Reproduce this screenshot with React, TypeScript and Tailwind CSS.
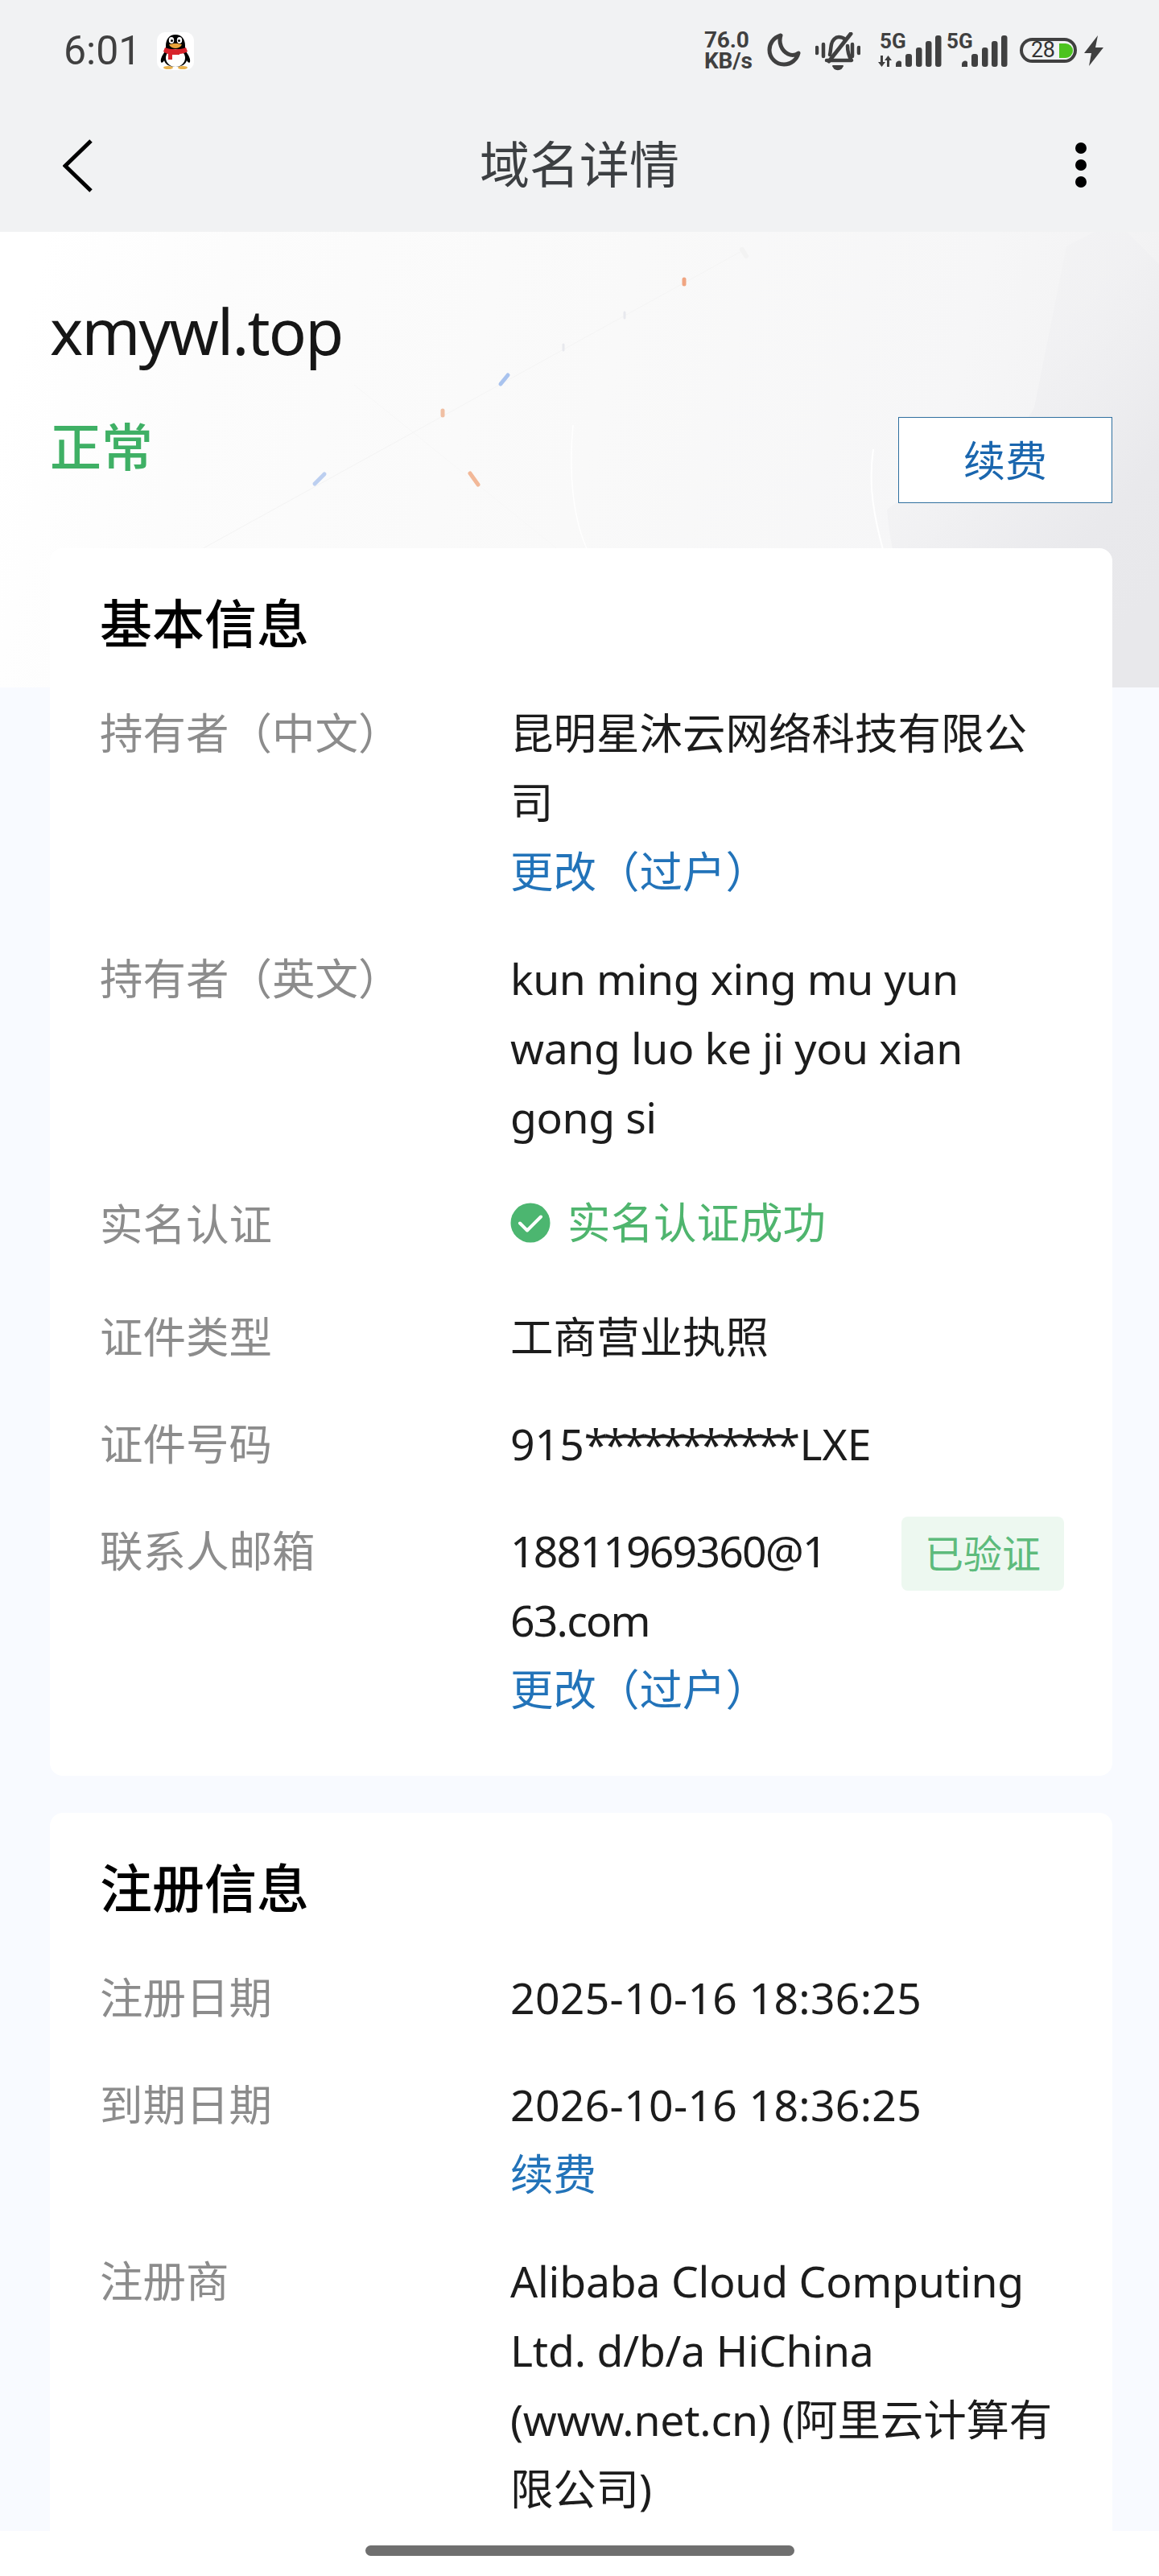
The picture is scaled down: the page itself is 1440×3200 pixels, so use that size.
import React from "react";

const FONT = "[font-family:'Noto_Sans','Noto_Sans_CJK_SC',sans-serif]";

function Penguin() {
  return (
    <div className="w-[46px] h-[47px] rounded-[10px] bg-white flex items-center justify-center ml-[27px]">
      <svg width="46" height="47" viewBox="0 0 46 47">
        <ellipse cx="14" cy="44" rx="6" ry="2" fill="#e9b04a" />
        <ellipse cx="32" cy="44" rx="6" ry="2" fill="#e9b04a" />
        <path d="M23 3c-8 0-12 6-12 14 0 3 0 5-1 7-3 4-6 9-5 13 1 2 3 0 4-2 1 5 7 8 14 8s13-3 14-8c1 2 3 4 4 2 1-4-2-9-5-13-1-2-1-4-1-7 0-8-4-14-12-14z" fill="#000" />
        <ellipse cx="23" cy="32" rx="12" ry="11" fill="#fff" />
        <path d="M10 19c7 3 19 3 26 0l2 5c-3 2-7 3-10 3v1h-9v6h-5v-7c-2-1-4-1-6-3z" fill="#d8242c" />
        <ellipse cx="18" cy="10" rx="3.2" ry="4" fill="#fff" />
        <ellipse cx="28" cy="10" rx="3.2" ry="4" fill="#fff" />
        <circle cx="18.5" cy="10.5" r="1.5" fill="#000" />
        <circle cx="27.5" cy="10.5" r="1.5" fill="#000" />
        <path d="M15 15.5c4-2 12-2 16 0-2 3.5-5 4.5-8 4.5s-6-1-8-4.5z" fill="#e8a33b" />
      </svg>
    </div>
  );
}

function Bars() {
  return (
    <svg width="58" height="40" viewBox="0 0 58 40" fill="#404040">
      <path d="M1 39v-4a4 4 0 0 1 7-2v6z" />
      <rect x="13" y="23" width="8" height="16" rx="3" />
      <rect x="26" y="15" width="7.5" height="24" rx="3" />
      <rect x="38" y="7" width="7.5" height="32" rx="3" />
      <rect x="50" y="0" width="7.5" height="39" rx="3" />
    </svg>
  );
}

function StatusBar() {
  return (
    <div className="h-[130px] flex items-start justify-between pl-[79px] pr-[69px]">
      <div className="flex items-start pt-[40px]">
        <span className="w-[89px] text-[50px] leading-[46px] text-[#404040] font-['Roboto',sans-serif]">6:01</span>
        <Penguin />
      </div>
      <div className="flex items-start pt-[40px] text-[#404040]">
        <div className="w-[66px] -mt-[3px] font-['Roboto',sans-serif] font-bold text-[28px] tracking-[-0.2px] text-left">
          <div className="h-[26px] leading-[26px]">76.0</div>
          <div className="h-[26px] leading-[26px]">KB/s</div>
        </div>
        <svg className="ml-[12px] mt-[1px]" width="42" height="42" viewBox="0 0 42 42" fill="none" stroke="#404040" strokeWidth="5" strokeLinecap="round" strokeLinejoin="round">
          <path d="M17 3C7 6 3 14 3 21c0 10 8 18 18 18 9 0 16-6 18-14-4 3-9 3-13 1-8-4-12-14-9-23z" />
        </svg>
        <svg className="ml-[18px]" width="56" height="48" viewBox="0 0 56 48" fill="none" stroke="#404040" strokeWidth="4.5" strokeLinecap="round" strokeLinejoin="round">
          <path d="M2 19v7M10 15v15M46 15v15M54 19v7" />
          <path d="M44 2 17 36" strokeWidth="5" />
          <path d="M18 28c1-4 1-8 2-13 1-5 5-9 9-9 3 0 6 1 8 3M40 17c0 6 1 12 5 18H14" />
          <path d="M22 42h12l-2 3c-2 1.500-6 1.500-8 0z" fill="#404040" strokeWidth="2" />
        </svg>
        <div className="relative w-[76px] h-[42px] ml-[21px] mt-[1px]">
          <span className="absolute left-[3px] top-0 font-['Roboto',sans-serif] font-bold text-[26px] leading-[20px]">5G</span>
          <svg className="absolute left-0 bottom-[0px]" width="22" height="14" viewBox="0 0 22 14" fill="#404040">
            <path d="M4 0h3v8h3l-4.500 6L1 8h3zM15 14h-3V6H9l4.500-6L18 6h-3z" />
          </svg>
          <div className="absolute left-[22px] top-[3px]"><Bars /></div>
        </div>
        <div className="relative w-[76px] h-[42px] ml-[10px] mt-[1px]">
          <span className="absolute left-0 top-0 font-['Roboto',sans-serif] font-bold text-[26px] leading-[20px]">5G</span>
          <div className="absolute left-[18px] top-[3px]"><Bars /></div>
        </div>
        <div className="relative w-[71px] h-[31px] ml-[15px] mt-[7px] rounded-full border-[4px] border-[#404040] flex items-center">
          <span className="ml-[10px] font-['Roboto',sans-serif] text-[27px] leading-[23px] tracking-[-0.5px] text-[#333]">28</span>
          <span className="absolute left-[45px] top-[2.500px] w-[17px] h-[18px] bg-[#4cc31f] rounded-r-full" />
        </div>
        <svg className="ml-[9px] mt-[4px]" width="24" height="38" viewBox="0 0 24 38" fill="#404040">
          <path d="M17 0 0 22h9L6 38l18-23h-10z" />
        </svg>
      </div>
    </div>
  );
}

function NavBar() {
  return (
    <div className="h-[158px] flex items-start justify-between pl-[78px] pr-[90px] relative">
      <svg className="mt-[43px]" width="38" height="66" viewBox="0 0 38 66" fill="none" stroke="#000" strokeWidth="5">
        <path d="M35 2 3 33l32 31" />
      </svg>
      <div className="absolute left-0 right-0 top-[30px] text-center text-[62px] leading-[88px] text-[#3c3f42]">域名详情</div>
      <div className="mt-[47px] flex flex-col gap-[7px]">
        <span className="w-[14px] h-[14px] rounded-full bg-black" />
        <span className="w-[14px] h-[14px] rounded-full bg-black" />
        <span className="w-[14px] h-[14px] rounded-full bg-black" />
      </div>
    </div>
  );
}

function HeroArt() {
  return (
    <svg className="absolute inset-0" width="1440" height="566" viewBox="0 0 1440 566" fill="none">
      <defs>
        <linearGradient id="base" x1="0" y1="0" x2="1" y2="0.1">
          <stop offset="0.04" stopColor="#ffffff" />
          <stop offset="0.2" stopColor="#fcfcfc" />
          <stop offset="0.55" stopColor="#f9f9f9" />
          <stop offset="0.85" stopColor="#f6f6f7" />
          <stop offset="1" stopColor="#f2f2f3" />
        </linearGradient>
        <linearGradient id="dark" x1="0" y1="0" x2="0.7" y2="1">
          <stop offset="0" stopColor="#f4f4f5" stopOpacity="0.4" />
          <stop offset="0.45" stopColor="#f0f0f2" stopOpacity="0.7" />
          <stop offset="0.8" stopColor="#e9e9ec" />
          <stop offset="1" stopColor="#e8e8eb" />
        </linearGradient>
      </defs>
      <rect width="1440" height="566" fill="url(#base)" />
      <path d="M1325 18l35-18h40l40 40v526h-283c-20-70-48-140-55-221 50-40 155-70 183-127z" fill="url(#dark)" />
      <path d="M1085 270c-10 70 10 130 70 296" stroke="#ffffff" strokeWidth="2" />
      <path d="M712 240c-6 60 0 120 20 160" stroke="#ffffff" strokeWidth="1.500" />
      <path d="M925 22 240 400" stroke="#f4f4f4" strokeWidth="1" />
      <path d="M440 190 700 400" stroke="#f7f7f7" strokeWidth="1" />
      <path d="M850 59v6" stroke="#f0a582" strokeWidth="5" strokeLinecap="round" />
      <path d="M622 189l9-11" stroke="#a9c3ee" strokeWidth="5" strokeLinecap="round" />
      <path d="M550 222v6" stroke="#f0bfa3" strokeWidth="5" strokeLinecap="round" />
      <path d="M391 313l12-12" stroke="#bccff0" strokeWidth="5" strokeLinecap="round" />
      <path d="M584 300l10 14" stroke="#f2b898" strokeWidth="5" strokeLinecap="round" />
      <path d="M776 100v7M700 140v7" stroke="#e8e9ee" strokeWidth="3" strokeLinecap="round" />
      <path d="M922 22l5 8" stroke="#f3f3f3" strokeWidth="6" strokeLinecap="round" />
    </svg>
  );
}

function Hero() {
  return (
    <div className="relative h-[566px] pl-[62px] pr-[58px]">
      <HeroArt />
      <div className="relative flex justify-between items-start">
        <div>
          <div className="pt-[76px] text-[78px] leading-[94px] tracking-[-1.800px] text-[#161616]">xmywl.top</div>
          <div className="pt-[53px] text-[64px] leading-[88px] text-[#3fb065] font-medium">正常</div>
        </div>
        <div className="mt-[230px] w-[266px] h-[107px] bg-white border border-[#2f6f9f] flex items-center justify-center text-[52px] text-[#1a66ae]">续费</div>
      </div>
    </div>
  );
}

function Row({ label, children, last }: { label: string; children: React.ReactNode; last?: boolean }) {
  return (
    <div className={`flex ${last ? "" : "mb-[47px]"}`}>
      <div className="w-[510px] shrink-0 text-[#8c8c8c]">{label}</div>
      <div className="flex-1 min-w-0">{children}</div>
    </div>
  );
}

function Link({ children }: { children: React.ReactNode }) {
  return <div className="text-[#2273b9]">{children}</div>;
}

function Card({ title, children, className = "" }: { title: string; children: React.ReactNode; className?: string }) {
  return (
    <div className={`relative bg-white rounded-[16px] pl-[62px] pr-[60px] text-[53.500px] leading-[86px] text-[#1c1c1c] ${className}`}>
      <div className="h-[187px] text-[65px] leading-[186px] font-medium text-black">{title}</div>
      {children}
    </div>
  );
}

export default function App() {
  return (
    <div className={`w-[1440px] h-[3200px] flex flex-col bg-white overflow-hidden ${FONT}`}>
      <div className="bg-[#f1f2f3]">
        <StatusBar />
        <NavBar />
      </div>
      <div className="flex-1 min-h-0 overflow-hidden bg-[#f8faff]">
        <Hero />
        <div className="-mt-[173px] ml-[62px] mr-[58px] flex flex-col gap-[46px]">
          <Card title="基本信息" className="pb-[64px]">
            <Row label="持有者（中文）">
              <div>昆明星沐云网络科技有限公司</div>
              <Link>更改（过户）</Link>
            </Row>
            <Row label="持有者（英文）">
              <div className="tracking-[-0.400px]">kun ming xing mu yun wang luo ke ji you xian gong si</div>
            </Row>
            <Row label="实名认证">
              <div className="flex items-center h-[96px] -mt-[7px] mb-[4px] text-[#4fb56e]">
                <svg className="mr-[21px]" width="50" height="50" viewBox="0 0 50 50">
                  <circle cx="25" cy="25" r="24.500" fill="#4cb670" />
                  <path d="M12 25.500l9 9 17-17" fill="none" stroke="#fff" strokeWidth="4" strokeLinecap="round" strokeLinejoin="round" />
                </svg>
                实名认证成功
              </div>
            </Row>
            <Row label="证件类型">工商营业执照</Row>
            <Row label="证件号码">
              915<span className="tracking-[-5.600px] pr-[5px]">***********</span>LXE
            </Row>
            <Row label="联系人邮箱" last>
              <div className="flex justify-between items-start">
                <div className="w-[400px] break-all tracking-[-1.800px]">18811969360@163.com</div>
                <div className="w-[202px] h-[92px] rounded-[8px] bg-[#edf8f0] text-[#5dbb7c] text-[48px] leading-[92px] text-center">已验证</div>
              </div>
              <Link>更改（过户）</Link>
            </Row>
          </Card>
          <Card title="注册信息">
            <Row label="注册日期"><div className="tracking-[0.300px]">2025-10-16 18:36:25</div></Row>
            <Row label="到期日期">
              <div className="tracking-[0.300px]">2026-10-16 18:36:25</div>
              <Link>续费</Link>
            </Row>
            <Row label="注册商">
              <div className="tracking-[-0.200px]">Alibaba Cloud Computing Ltd. d/b/a HiChina (www.net.cn) (阿里云计算有限公司)</div>
            </Row>
          </Card>
        </div>
      </div>
      <div className="h-[56px] shrink-0 flex justify-center pt-[18px] bg-white">
        <div className="w-[533px] h-[13px] rounded-full bg-[#6f6f6f]" />
      </div>
    </div>
  );
}
